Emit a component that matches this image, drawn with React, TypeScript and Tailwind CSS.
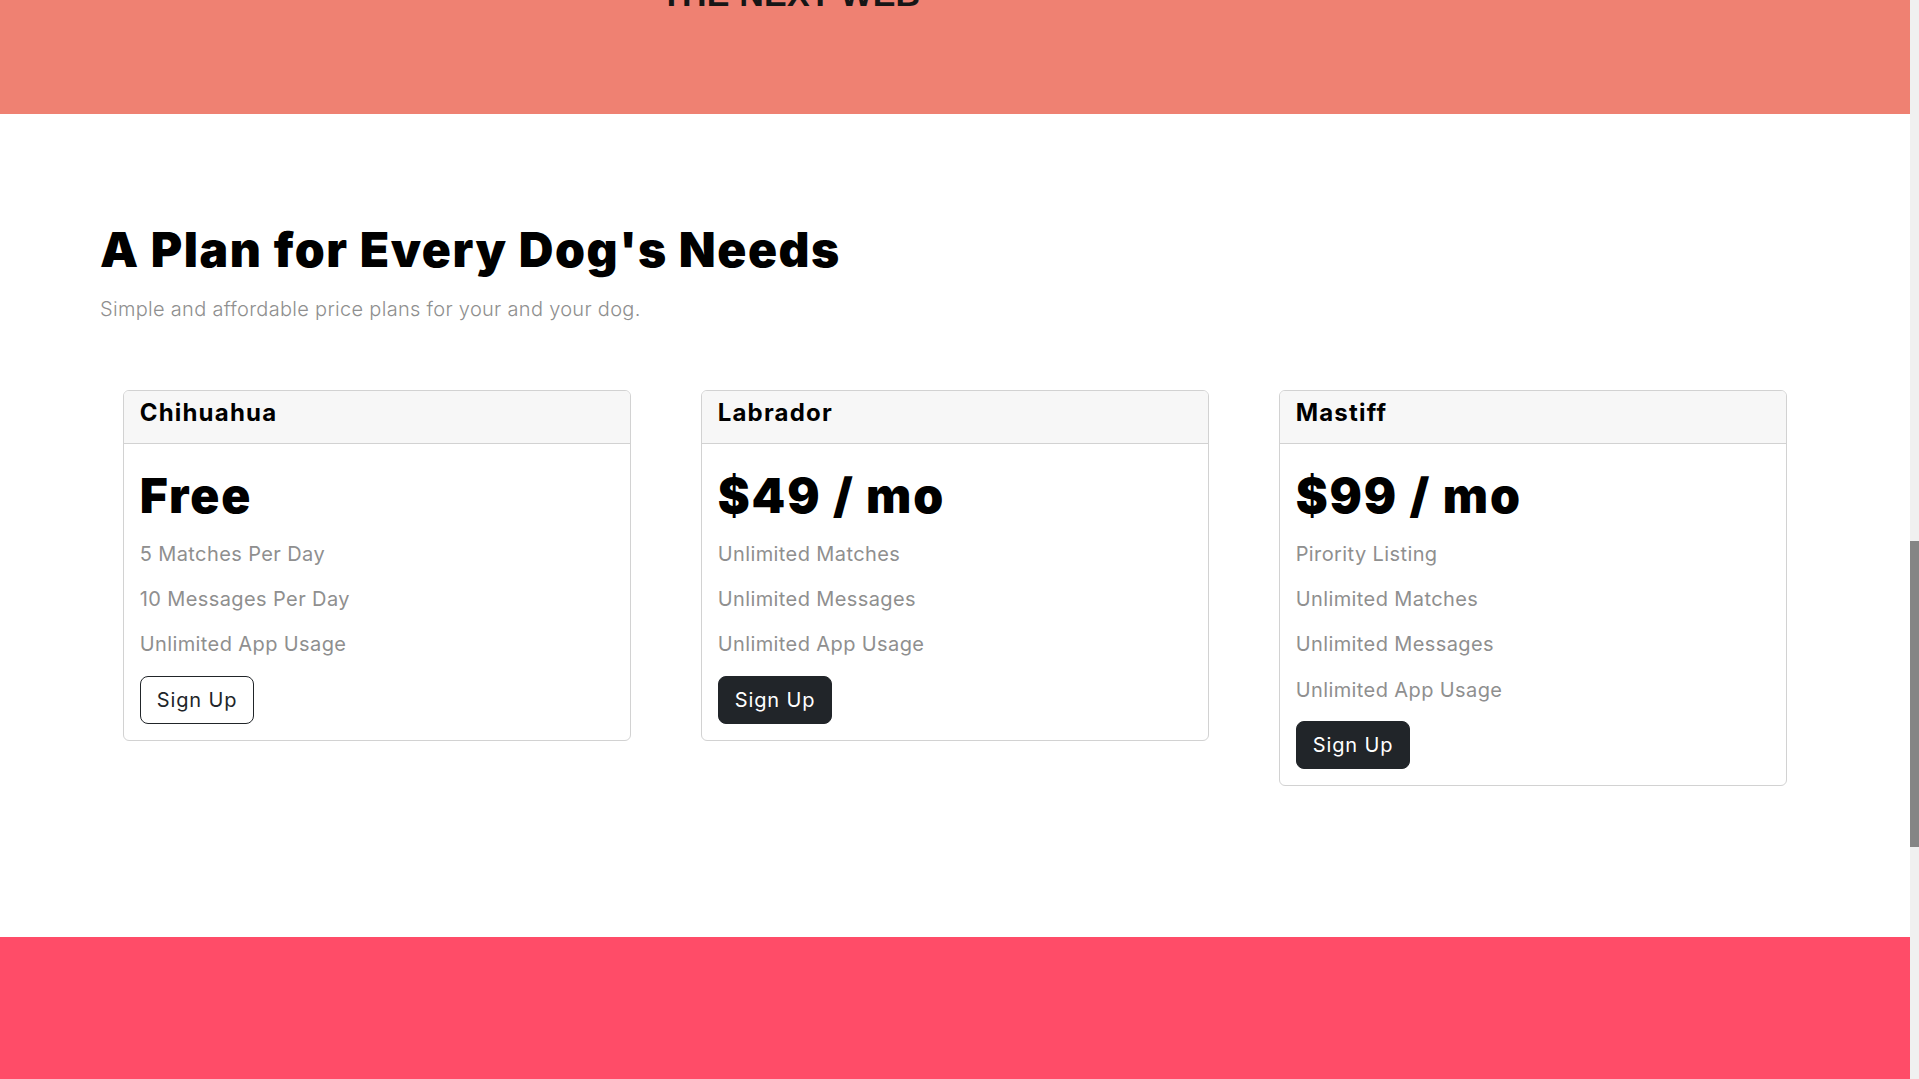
import React from "react";

type Plan = {
  name: string;
  price: string;
  features: string[];
  outline?: boolean;
};

const plans: Plan[] = [
  {
    name: "Chihuahua",
    price: "Free",
    features: ["5 Matches Per Day", "10 Messages Per Day", "Unlimited App Usage"],
    outline: true,
  },
  {
    name: "Labrador",
    price: "$49 / mo",
    features: ["Unlimited Matches", "Unlimited Messages", "Unlimited App Usage"],
  },
  {
    name: "Mastiff",
    price: "$99 / mo",
    features: ["Pirority Listing", "Unlimited Matches", "Unlimited Messages", "Unlimited App Usage"],
  },
];

function PlanCard({ plan }: { plan: Plan }) {
  return (
    <div className="border border-[#d2d2d2] rounded-[6px] bg-white overflow-hidden">
      <div className="bg-[#f7f7f7] border-b border-[#d2d2d2] px-4 pt-2 pb-[7px]">
        <h3 className="text-[24px] leading-[28.8px] font-bold tracking-[1.2px] text-black mb-2">{plan.name}</h3>
      </div>
      <div className="p-4">
        <h2 className="text-[48px] leading-[72px] font-black tracking-[1.9px] text-black mb-2">{plan.price}</h2>
        {plan.features.map((f) => (
          <p key={f} className="text-[20px] leading-[29.33px] tracking-[0.4px] text-[#8f8f8f] mb-4">
            {f}
          </p>
        ))}
        {plan.outline ? (
          <button className="text-[20px] leading-[30px] tracking-[0.9px] px-4 py-2 rounded-lg border border-[#212529] text-[#212529] bg-white">
            Sign Up
          </button>
        ) : (
          <button className="text-[20px] leading-[30px] tracking-[0.9px] px-4 py-2 rounded-lg border border-[#212529] text-white bg-[#212529]">
            Sign Up
          </button>
        )}
      </div>
    </div>
  );
}

export default function App() {
  return (
    <div className="w-[1919px] h-[1079px] overflow-hidden flex bg-white font-['Inter',sans-serif]">
      <div className="flex-1 flex flex-col min-w-0">
        <div className="h-[114px] shrink-0 bg-[#ef8172] overflow-hidden">
          <div className="pl-[661px] -mt-[21px] text-[34px] leading-[31px] font-['Liberation_Sans',sans-serif] font-bold text-[#161616] tracking-[0.2px]">
            THE NEXT WEB
          </div>
        </div>
        <section className="px-[100px] pt-[100px] pb-[151px] shrink-0">
          <h2 className="text-[48px] leading-[72px] font-black tracking-[1.55px] text-black mb-2">
            A Plan for Every Dog's Needs
          </h2>
          <p className="text-[20px] leading-[30px] font-light tracking-[0.3px] text-[#8f8f8f]">
            Simple and affordable price plans for your and your dog.
          </p>
          <div className="grid grid-cols-3 gap-x-[69.36px] mx-[22.68px] mt-[66px] items-start">
            {plans.map((p) => (
              <PlanCard key={p.name} plan={p} />
            ))}
          </div>
        </section>
        <div className="flex-1 bg-[#ff4c68]" />
      </div>
      <div className="w-[9px] shrink-0 bg-[#f0f0f0] flex flex-col">
        <div className="h-[541px] shrink-0" />
        <div className="h-[306px] shrink-0 bg-[#858585]" />
      </div>
    </div>
  );
}
